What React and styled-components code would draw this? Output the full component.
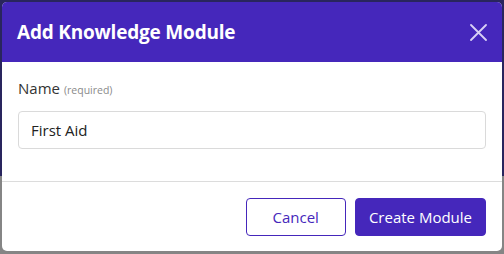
import React from "react";
import styled, { createGlobalStyle } from "styled-components";

const GlobalStyle = createGlobalStyle`
  html, body {
    margin: 0;
    padding: 0;
  }
  body {
    width: 504px;
    height: 254px;
    overflow: hidden;
    font-family: "Open Sans", "Noto Sans", "Liberation Sans", sans-serif;
    background: linear-gradient(to bottom, #29255e 0, #29255e 176px, #858585 176px, #858585 100%);
  }
`;

const Backdrop = styled.div`
  box-sizing: border-box;
  width: 504px;
  height: 254px;
  padding: 2px 2px 3px 2px;
`;

const Modal = styled.div`
  height: 100%;
  display: flex;
  flex-direction: column;
  background: #fff;
  border-radius: 5px;
  overflow: hidden;
`;

const Header = styled.div`
  height: 60px;
  flex: none;
  display: flex;
  align-items: center;
  justify-content: space-between;
  padding: 0 14px 0 15px;
  background: #4527bb;
  color: #fff;
`;

const Title = styled.h2`
  margin: 0;
  font-size: 19px;
  font-weight: 700;
  letter-spacing: -0.2px;
`;

const CloseButton = styled.button`
  border: none;
  background: none;
  padding: 0;
  width: 20px;
  height: 20px;
  display: flex;
  align-items: center;
  justify-content: center;
  cursor: pointer;
`;

const Body = styled.div`
  box-sizing: border-box;
  padding: 16px 16px 0 16px;
  height: 120px;
  flex: none;
  border-bottom: 1px solid #dcdcdc;
`;

const Label = styled.label`
  display: block;
  font-size: 15px;
  color: #333;
  margin-bottom: 11px;
  line-height: 20px;
`;

const Hint = styled.span`
  font-size: 10.5px;
  color: #8a8a8a;
  margin-left: 4px;
`;

const Input = styled.input`
  box-sizing: border-box;
  width: 100%;
  height: 38px;
  border: 1px solid #dadada;
  border-radius: 4px;
  padding: 0 12px;
  font-family: inherit;
  font-size: 15px;
  color: #222;
  outline: none;
`;

const Footer = styled.div`
  flex: 1;
  display: flex;
  align-items: center;
  justify-content: flex-end;
  gap: 9px;
  padding: 0 16px 0 0;
`;

const Button = styled.button`
  box-sizing: border-box;
  height: 38px;
  padding: 0 ${(p) => (p.$primary ? "13px" : "26px")};
  border-radius: 4px;
  border: 1px solid #4527bb;
  background: ${(p) => (p.$primary ? "#4527bb" : "#fff")};
  color: ${(p) => (p.$primary ? "#fff" : "#4527bb")};
  font-family: inherit;
  font-size: 15px;
  cursor: pointer;
`;

export default function App() {
  return (
    <>
      <GlobalStyle />
      <Backdrop>
        <Modal>
          <Header>
            <Title>Add Knowledge Module</Title>
            <CloseButton aria-label="Close">
              <svg width="17" height="17" viewBox="0 0 17 17">
                <path d="M1 1L16 16M16 1L1 16" stroke="#d8d0f5" strokeWidth="1.8" strokeLinecap="round" />
              </svg>
            </CloseButton>
          </Header>
          <Body>
            <Label htmlFor="name">
              Name<Hint>(required)</Hint>
            </Label>
            <Input id="name" defaultValue="First Aid" />
          </Body>
          <Footer>
            <Button>Cancel</Button>
            <Button $primary>Create Module</Button>
          </Footer>
        </Modal>
      </Backdrop>
    </>
  );
}
